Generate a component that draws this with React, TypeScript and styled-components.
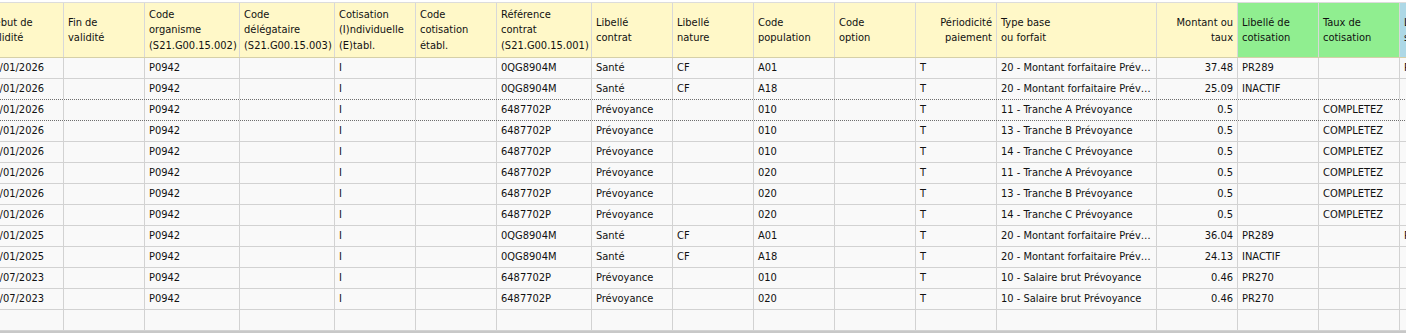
import React from 'react'
import { type ReactElement } from 'react'
import styled, { createGlobalStyle } from 'styled-components'

const GlobalStyle = createGlobalStyle`
html, body {
  margin: 0;
  padding: 0;
  background: #ffffff;
}
body {
  font-family: 'DejaVu Sans Condensed', 'DejaVu Sans', sans-serif;
  font-size: 11px;
  color: #111;
}
`

// widths include the 1px right border of each column
const COLS = [81, 81, 95, 95, 81, 81, 95, 81, 81, 81, 81, 81, 160, 81, 81, 81, 81]
const TEMPLATE = COLS.map((w) => `${w}px`).join(' ')

const Viewport = styled.div`
width: 1406px;
height: 333px;
overflow: hidden;
padding-top: 2px;
box-sizing: border-box;
`

const Sheet = styled.div`
margin-left: -17px;
width: max-content;
border-top: 1px solid #dcdcdc;
border-bottom: 2px solid #c8c8c8;
`

const Row = styled.div<{ $dotted?: boolean }>`
display: grid;
grid-template-columns: ${TEMPLATE};
height: 21px;
background: #f9f9f9;
border-bottom: 1px ${(p) => (p.$dotted ? 'dotted #6e6e6e' : 'solid #d2d2d2')};
box-sizing: border-box;
`

const HeadRow = styled.div`
display: grid;
grid-template-columns: ${TEMPLATE};
height: 55px;
border-bottom: 1px solid #d6d0a8;
box-sizing: border-box;
`

const HeadCell = styled.div<{ $tone?: 'yellow' | 'green' | 'blue', $right?: boolean }>`
display: flex;
align-items: center;
justify-content: ${(p) => (p.$right ? 'flex-end' : 'flex-start')};
text-align: ${(p) => (p.$right ? 'right' : 'left')};
padding: 0 4px;
line-height: 15.5px;
box-sizing: border-box;
border-right: 1px solid #d8d8d8;
background: ${(p) => p.$tone === 'green' ? '#90ee90' : p.$tone === 'blue' ? '#add8e6' : '#fff8c8'};
overflow: hidden;
`

const Cell = styled.div<{ $right?: boolean }>`
padding: 0 4px;
line-height: 20px;
box-sizing: border-box;
border-right: 1px solid #d2d2d2;
text-align: ${(p) => (p.$right ? 'right' : 'left')};
white-space: nowrap;
overflow: hidden;
text-overflow: ellipsis;
`

interface Header {
  label: string[]
  tone?: 'yellow' | 'green' | 'blue'
  right?: boolean
}

const HEADERS: Header[] = [
  { label: ['Début de', 'validité'] },
  { label: ['Fin de', 'validité'] },
  { label: ['Code', 'organisme', '(S21.G00.15.002)'] },
  { label: ['Code', 'délégataire', '(S21.G00.15.003)'] },
  { label: ['Cotisation', '(I)ndividuelle', '(E)tabl.'] },
  { label: ['Code', 'cotisation', 'établ.'] },
  { label: ['Référence', 'contrat', '(S21.G00.15.001)'] },
  { label: ['Libellé', 'contrat'] },
  { label: ['Libellé', 'nature'] },
  { label: ['Code', 'population'] },
  { label: ['Code', 'option'] },
  { label: ['Périodicité', 'paiement'], right: true },
  { label: ['Type base', 'ou forfait'] },
  { label: ['Montant ou', 'taux'], right: true },
  { label: ['Libellé de', 'cotisation'], tone: 'green' },
  { label: ['Taux de', 'cotisation'], tone: 'green' },
  { label: ['Libellé', 'statut'], tone: 'blue' }
]

const RIGHT_COLS = new Set([13])

const santé = (date: string, pop: string, amount: string, lib: string, last = ''): string[] => [
  date, '', 'P0942', '', 'I', '', '0QG8904M', 'Santé', 'CF', pop, '', 'T',
  '20 - Montant forfaitaire Prévoyance', amount, lib, '', last
]

const prev = (date: string, pop: string, type: string, amount: string, lib: string, taux: string): string[] => [
  date, '', 'P0942', '', 'I', '', '6487702P', 'Prévoyance', '', pop, '', 'T',
  type, amount, lib, taux, ''
]

const ROWS: string[][] = [
  santé('01/01/2026', 'A01', '37.48', 'PR289', 'PR289'),
  santé('01/01/2026', 'A18', '25.09', 'INACTIF'),
  prev('01/01/2026', '010', '11 - Tranche A Prévoyance', '0.5', '', 'COMPLETEZ'),
  prev('01/01/2026', '010', '13 - Tranche B Prévoyance', '0.5', '', 'COMPLETEZ'),
  prev('01/01/2026', '010', '14 - Tranche C Prévoyance', '0.5', '', 'COMPLETEZ'),
  prev('01/01/2026', '020', '11 - Tranche A Prévoyance', '0.5', '', 'COMPLETEZ'),
  prev('01/01/2026', '020', '13 - Tranche B Prévoyance', '0.5', '', 'COMPLETEZ'),
  prev('01/01/2026', '020', '14 - Tranche C Prévoyance', '0.5', '', 'COMPLETEZ'),
  santé('01/01/2025', 'A01', '36.04', 'PR289', 'PR289'),
  santé('01/01/2025', 'A18', '24.13', 'INACTIF'),
  prev('01/07/2023', '010', '10 - Salaire brut Prévoyance', '0.46', 'PR270', ''),
  prev('01/07/2023', '020', '10 - Salaire brut Prévoyance', '0.46', 'PR270', ''),
  Array(17).fill('')
]

export default function App (): ReactElement {
  return (
    <Viewport>
      <GlobalStyle />
      <Sheet>
        <HeadRow>
          {HEADERS.map((h, i) => (
            <HeadCell key={i} $tone={h.tone} $right={h.right}>
              <div>
                {h.label.map((l, j) => <div key={j}>{l}</div>)}
              </div>
            </HeadCell>
          ))}
        </HeadRow>
        {ROWS.map((r, i) => (
          <Row key={i} $dotted={i === 1 || i === 2}>
            {r.map((v, j) => (
              <Cell key={j} $right={RIGHT_COLS.has(j)}>{v}</Cell>
            ))}
          </Row>
        ))}
      </Sheet>
    </Viewport>
  )
}
